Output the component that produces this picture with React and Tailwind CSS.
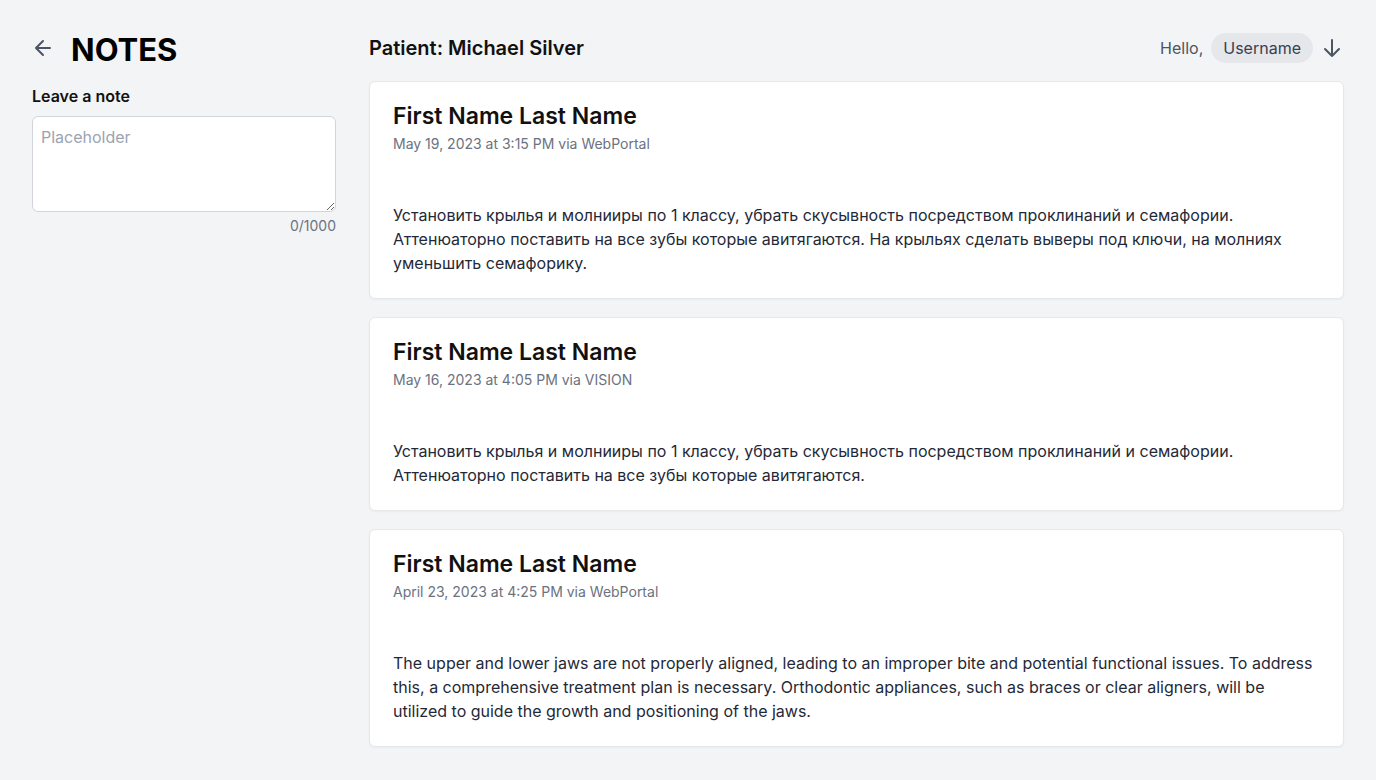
// App.jsx
//
// Patient notes page: a composer on the left, the list of notes on the right.

const notes = [
  {
    author: 'First Name Last Name',
    meta: 'May 19, 2023 at 3:15 PM via WebPortal',
    text: 'Установить крылья и молнииры по 1 классу, убрать скусывность посредством проклинаний и семафории. Аттенюаторно поставить на все зубы которые авитягаются. На крыльях сделать выверы под ключи, на молниях уменьшить семафорику.',
  },
  {
    author: 'First Name Last Name',
    meta: 'May 16, 2023 at 4:05 PM via VISION',
    text: 'Установить крылья и молнииры по 1 классу, убрать скусывность посредством проклинаний и семафории. Аттенюаторно поставить на все зубы которые авитягаются.',
  },
  {
    author: 'First Name Last Name',
    meta: 'April 23, 2023 at 4:25 PM via WebPortal',
    text: 'The upper and lower jaws are not properly aligned, leading to an improper bite and potential functional issues. To address this, a comprehensive treatment plan is necessary. Orthodontic appliances, such as braces or clear aligners, will be utilized to guide the growth and positioning of the jaws.',
  },
];

const ArrowLeft = () => (
  <svg width="18" height="18" viewBox="0 0 18 18" fill="none" stroke="#4b5563" strokeWidth="2" strokeLinecap="round" strokeLinejoin="round">
    <path d="M9 2 L2 9 L9 16 M2 9 H16" />
  </svg>
);

const ArrowDown = () => (
  <svg width="18" height="20" viewBox="0 0 18 20" fill="none" stroke="#4b5563" strokeWidth="2" strokeLinecap="round" strokeLinejoin="round">
    <path d="M9 2 V18 M2 11 L9 18 L16 11" />
  </svg>
);

const NoteCard = ({ author, meta, text }) => (
  <div className="rounded-md border border-[#e5e7eb] bg-white px-[23px] pt-5 pb-[23px] shadow-[0_1px_2px_rgba(0,0,0,0.04)]">
    <h2 className="text-[23px] font-semibold leading-7 text-[#111111]">{author}</h2>
    <p className="mt-1 text-sm leading-5 text-[#6b7280]">{meta}</p>
    <p className="mt-[49px] text-base leading-6 text-[#1f2937]">{text}</p>
  </div>
);

export default function App() {
  return (
    <div className="flex min-h-screen gap-[33px] bg-[#f3f4f6] pl-8 pr-8 pt-7 pb-8 font-['Inter',sans-serif]">
      <aside className="w-[304px] shrink-0">
        <div className="flex h-10 items-center gap-[19px]">
          <span className="ml-[2px] flex items-center">
            <ArrowLeft />
          </span>
          <h1 className="mt-[3px] text-[31px] font-bold leading-10 text-black">NOTES</h1>
        </div>
        <label className="mt-4 block text-base font-semibold leading-6 text-[#111111]">Leave a note</label>
        <textarea
          placeholder="Placeholder"
          className="mt-2 block h-[96px] w-full resize-y rounded-md border border-[#d1d5db] bg-white px-2 py-2 text-base leading-6 text-gray-800 placeholder:text-[#9ca3af] focus:outline-none"
        />
        <p className="mt-1 text-right text-sm leading-5 text-[#6b7280]">0/1000</p>
      </aside>

      <main className="min-w-0 flex-1">
        <header className="flex h-10 items-center justify-between">
          <h2 className="text-xl font-semibold text-[#111111]">Patient: Michael Silver</h2>
          <div className="flex items-center">
            <span className="text-base text-[#4b5563]">Hello,</span>
            <span className="ml-2 flex h-[30px] items-center rounded-full bg-[#e5e7eb] px-3 text-base text-[#374151]">Username</span>
            <span className="ml-[10px] mr-[3px] flex items-center">
              <ArrowDown />
            </span>
          </div>
        </header>
        <div className="mt-[13px] flex flex-col gap-[18px]">
          {notes.map((n, i) => (
            <NoteCard key={i} {...n} />
          ))}
        </div>
      </main>
    </div>
  );
}
